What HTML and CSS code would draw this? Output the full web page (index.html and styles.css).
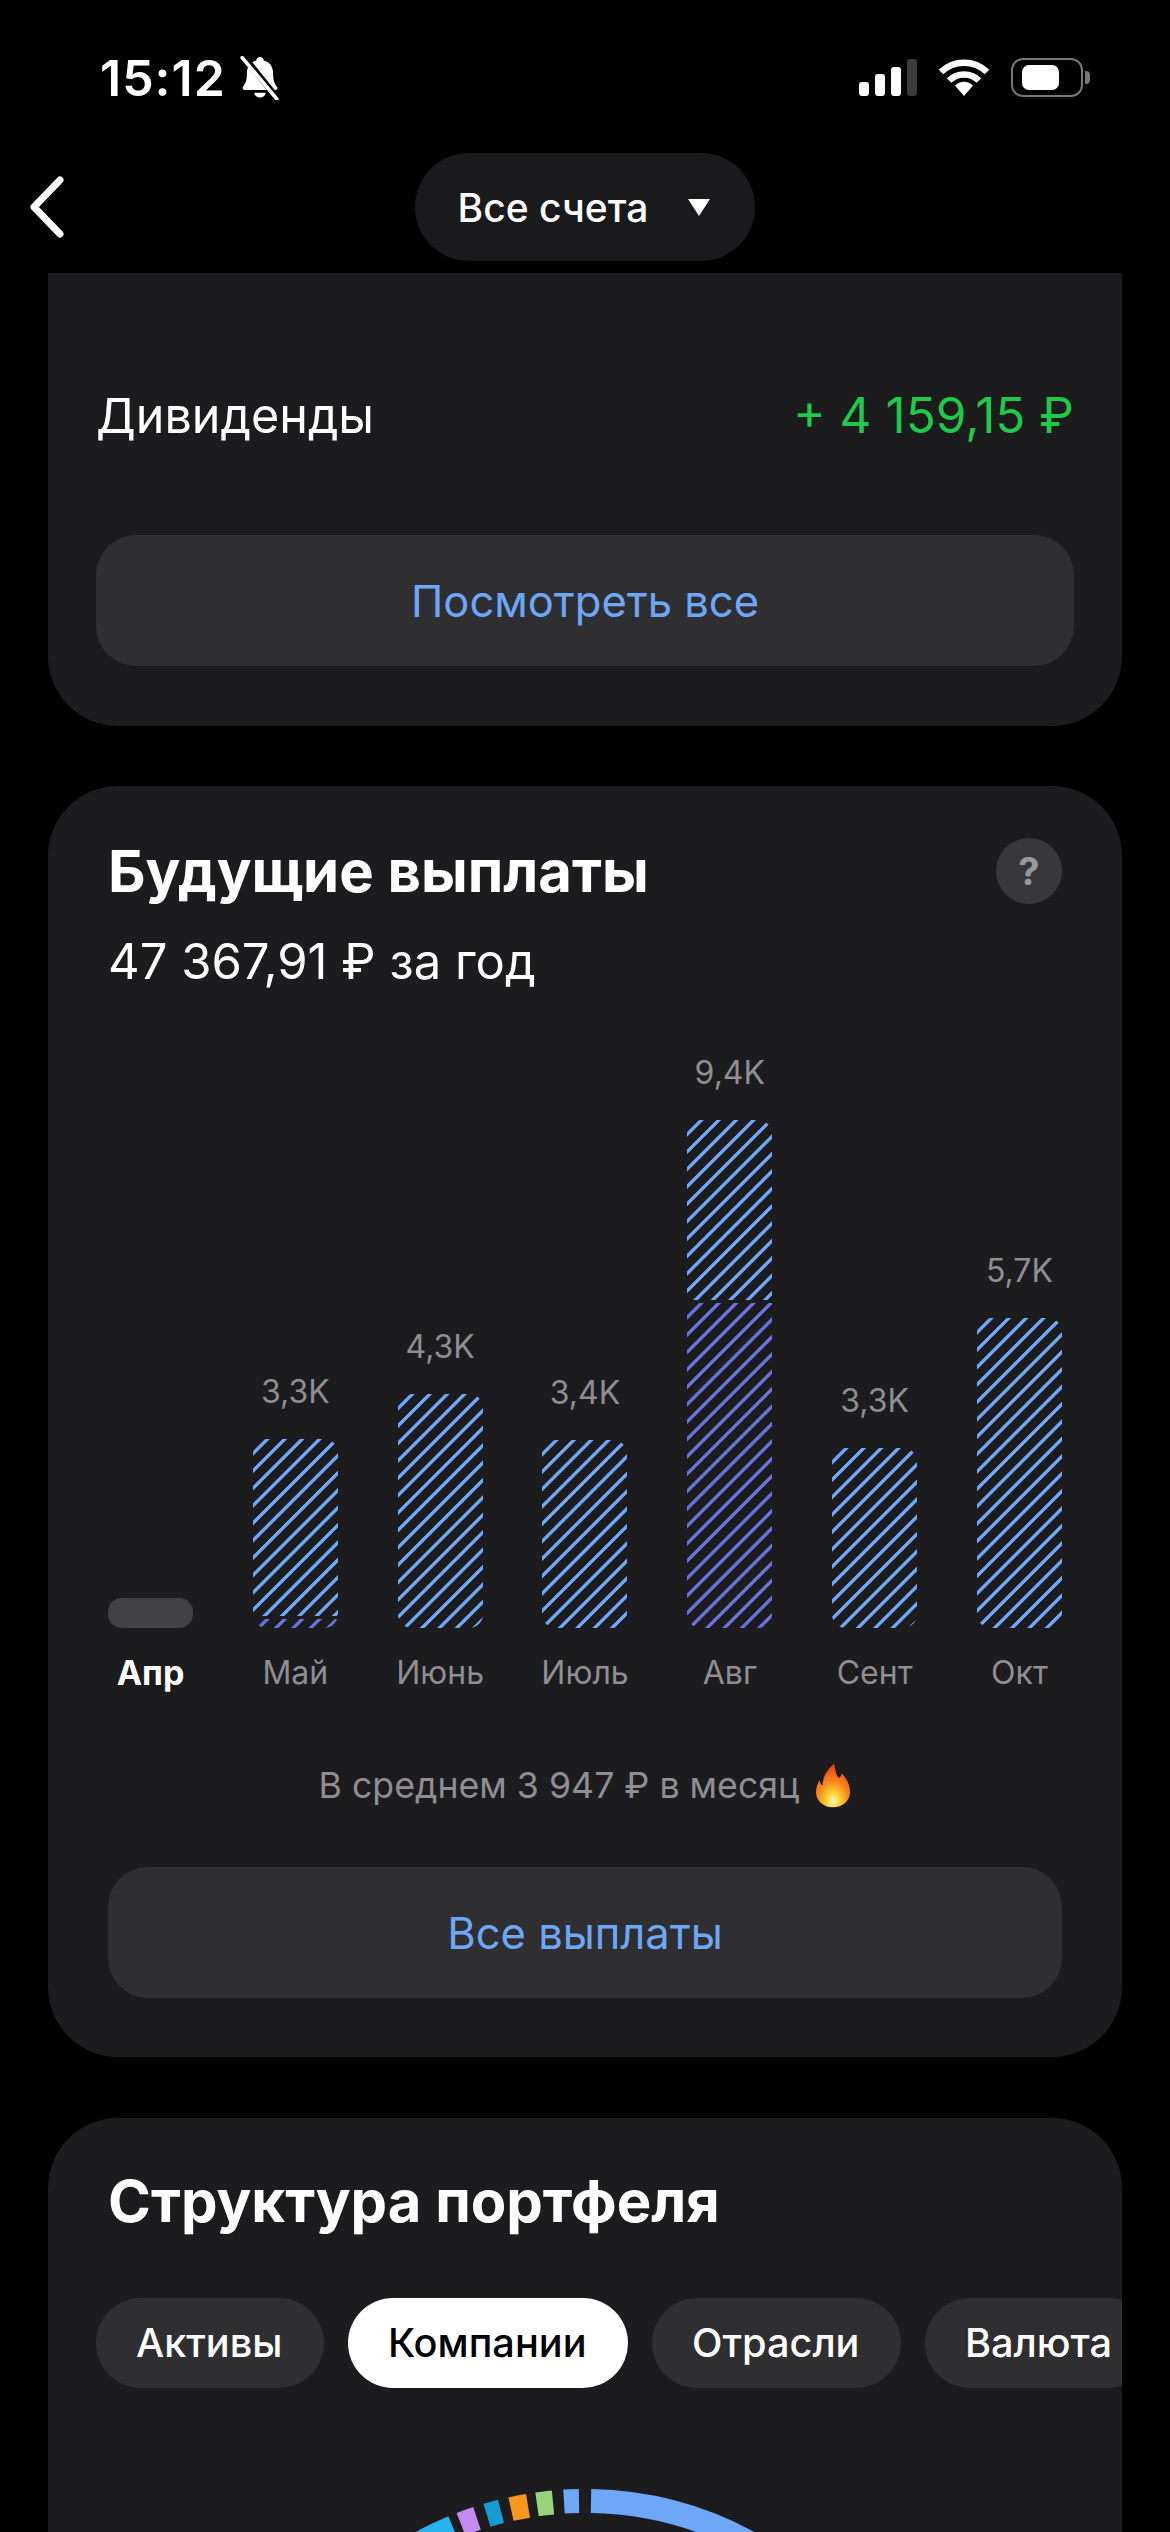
FILE: index.html
```html
<!DOCTYPE html>
<html lang="ru">
<head>
    <meta charset="UTF-8">
    <meta name="viewport" content="width=device-width, initial-scale=1.0">
    <title>Дивиденды</title>
    <link rel="stylesheet" href="styles.css">
</head>
<body>
    <header class="status-bar">
        <div class="status-left">
            <span class="time">15:12</span>
            <svg class="bell" width="44" height="44" viewBox="0 0 42 42">
                <path d="M21 1c-2 0-3.400 1.400-3.600 3.300C11.500 5.800 8.500 10.500 8.500 16.500c0 6-1 9.500-3.500 12.500-1.200 1.500-.6 3.500 1.500 3.500h29c2.100 0 2.700-2 1.500-3.500-2.500-3-3.500-6.500-3.500-12.500 0-6-3-10.700-8.900-12.200C24.400 2.400 23 1 21 1z" fill="#fff"/>
                <path d="M15.500 35a5.600 5.600 0 0 0 11 0z" fill="#fff"/>
                <path d="M6 1l32 40" stroke="#000" stroke-width="6"/>
                <path d="M4 1.500l33 39.500" stroke="#fff" stroke-width="3.500" stroke-linecap="round"/>
            </svg>
        </div>
        <div class="status-right">
            <div class="signal">
                <span class="signal-bar signal-1"></span>
                <span class="signal-bar signal-2"></span>
                <span class="signal-bar signal-3"></span>
                <span class="signal-bar signal-4"></span>
            </div>
            <svg class="wifi" width="50" height="37" viewBox="0 0 50 37">
                <path d="M2 13A33 33 0 0 1 48 13" fill="none" stroke="#fff" stroke-width="6.500"/>
                <path d="M10 21.500A21.500 21.500 0 0 1 40 21.500" fill="none" stroke="#fff" stroke-width="6.500"/>
                <path d="M25 37l-9-10.500a12.500 12.500 0 0 1 18 0z" fill="#fff"/>
            </svg>
            <div class="battery">
                <div class="battery-body"><span class="battery-fill"></span></div>
                <span class="battery-nub"></span>
            </div>
        </div>
    </header>

    <nav class="nav">
        <svg class="back" width="36" height="62" viewBox="0 0 36 62">
            <path d="M31 4L5 31l26 27" fill="none" stroke="#fff" stroke-width="7" stroke-linecap="round" stroke-linejoin="round"/>
        </svg>
        <button class="account-pill">
            <span>Все счета</span>
            <span class="pill-arrow"></span>
        </button>
    </nav>

    <main>
        <section class="card card-dividends">
            <div class="dividend-row">
                <span>Дивиденды</span>
                <span class="dividend-sum">+ 4 159,15 ₽</span>
            </div>
            <button class="wide-button">Посмотреть все</button>
        </section>

        <section class="card card-payouts">
            <div class="card-head">
                <h2>Будущие выплаты</h2>
                <span class="help">?</span>
            </div>
            <p class="year-sum">47 367,91 ₽ за год</p>

            <div class="chart">
                <div class="column">
                    <div class="bar bar-empty"></div>
                    <span class="month month-current">Апр</span>
                </div>
                <div class="column">
                    <span class="value">3,3K</span>
                    <div class="bar">
                        <div class="part part-planned" style="height: 177px"></div>
                        <div class="part part-confirmed" style="height: 9px"></div>
                    </div>
                    <span class="month">Май</span>
                </div>
                <div class="column">
                    <span class="value">4,3K</span>
                    <div class="bar">
                        <div class="part part-planned" style="height: 234px"></div>
                    </div>
                    <span class="month">Июнь</span>
                </div>
                <div class="column">
                    <span class="value">3,4K</span>
                    <div class="bar">
                        <div class="part part-planned" style="height: 188px"></div>
                    </div>
                    <span class="month">Июль</span>
                </div>
                <div class="column">
                    <span class="value">9,4K</span>
                    <div class="bar">
                        <div class="part part-planned" style="height: 180px"></div>
                        <div class="part part-confirmed" style="height: 325px"></div>
                    </div>
                    <span class="month">Авг</span>
                </div>
                <div class="column">
                    <span class="value">3,3K</span>
                    <div class="bar">
                        <div class="part part-planned" style="height: 180px"></div>
                    </div>
                    <span class="month">Сент</span>
                </div>
                <div class="column">
                    <span class="value">5,7K</span>
                    <div class="bar">
                        <div class="part part-planned" style="height: 310px"></div>
                    </div>
                    <span class="month">Окт</span>
                </div>
            </div>

            <p class="average">
                В среднем 3 947 ₽ в месяц
                <svg class="flame" width="36" height="45" viewBox="0 0 38 46">
                    <defs>
                        <radialGradient id="flame-fill" cx="0.5" cy="0.86" r="0.8">
                            <stop offset="0" stop-color="#fff7c0"/>
                            <stop offset="0.22" stop-color="#ffd83a"/>
                            <stop offset="0.55" stop-color="#fb8a1c"/>
                            <stop offset="1" stop-color="#e8431c"/>
                        </radialGradient>
                    </defs>
                    <path d="M20 0c2 6 1 10 5 15 2-1 3-3 3-5 6 6 9 13 9 20 0 9-8 16-18 16S1 39 1 30c0-5 2-9 4-13 0 3 1 5 3 6C8 14 13 6 20 0z" fill="url(#flame-fill)"/>
                </svg>
            </p>
            <button class="wide-button">Все выплаты</button>
        </section>

        <section class="card card-structure">
            <h2>Структура портфеля</h2>
            <div class="chips">
                <span class="chip">Активы</span>
                <span class="chip chip-active">Компании</span>
                <span class="chip">Отрасли</span>
                <span class="chip">Валюта</span>
            </div>
            <svg class="donut" width="1074" height="60" viewBox="0 0 1074 60">
                <g fill="none" stroke-width="24">
                    <path d="M543 22.050A343 343 0 0 1 837 198.700" stroke="#6ea6f8"/>
                    <path d="M516 22.600A343 343 0 0 1 531 22.050" stroke="#6ea6f8"/>
                    <path d="M489 25.400A343 343 0 0 1 505 23.500" stroke="#9ad37a"/>
                    <path d="M463 30.100A343 343 0 0 1 480 26.800" stroke="#f7981d"/>
                    <path d="M439 36.300A343 343 0 0 1 453 32.400" stroke="#169bd5"/>
                    <path d="M413 45.200A343 343 0 0 1 429 39.400" stroke="#c58af0"/>
                    <path d="M347 79.400A343 343 0 0 1 405 48.400" stroke="#27b4ec"/>
                </g>
            </svg>
        </section>
    </main>
</body>
</html>
```

FILE: styles.css
```css
* {
    box-sizing: border-box;
}

html, body {
    height: 2532px;
}

body {
    margin: 0;
    overflow: hidden;
    background-color: #000;
    color: #fff;
    font-family: Inter, "Noto Sans", sans-serif;
}

h2, p {
    margin: 0;
}

button {
    border: none;
    font-family: inherit;
}

/* status bar */
.status-bar {
    display: flex;
    justify-content: space-between;
    height: 153px;
    padding: 56px 80px 0 100px;
}

.status-left {
    display: flex;
    align-items: flex-start;
    gap: 12px;
}

.time {
    font-size: 50px;
    font-weight: 600;
    line-height: 44px;
    letter-spacing: 1px;
}

.status-right {
    display: flex;
    align-items: flex-start;
    gap: 22px;
    padding-top: 3px;
}

.signal {
    display: flex;
    align-items: flex-end;
    gap: 6px;
    height: 37px;
}

.signal-bar {
    width: 10px;
    border-radius: 3px;
    background-color: #fff;
}

.signal-1 { height: 14px; }
.signal-2 { height: 22px; }
.signal-3 { height: 29px; }
.signal-4 { height: 37px; background-color: #3a3a3c; }

.battery {
    display: flex;
    align-items: center;
    gap: 2px;
    margin-top: -1px;
}

.battery-body {
    width: 72px;
    height: 39px;
    padding: 5px 22px 5px 9px;
    border: 2px solid #77777a;
    border-radius: 12px;
}

.battery-fill {
    display: block;
    height: 100%;
    border-radius: 7px;
    background-color: #fff;
}

.battery-nub {
    width: 5px;
    height: 13px;
    border-radius: 0 4px 4px 0;
    background-color: #77777a;
}

/* top nav */
.nav {
    display: grid;
    grid-template-columns: 1fr auto 1fr;
    align-items: center;
    height: 108px;
}

.back {
    justify-self: start;
    margin-left: 29px;
}

.account-pill {
    display: flex;
    align-items: center;
    gap: 40px;
    grid-column: 2;
    height: 108px;
    padding: 0 45px 0 43px;
    border-radius: 54px;
    background-color: #1a1a1c;
    color: #fff;
    font-size: 39px;
    font-weight: 500;
}

.pill-arrow {
    width: 0;
    height: 0;
    border-left: 11px solid transparent;
    border-right: 11px solid transparent;
    border-top: 17px solid #fff;
}

/* cards */
main {
    padding: 12px 48px 0;
}

.card {
    border-radius: 70px;
    background-color: #1c1c1e;
}

.card h2 {
    font-size: 58px;
    font-weight: 700;
}

.wide-button {
    display: block;
    width: 100%;
    height: 131px;
    border-radius: 40px;
    background-color: #2f2f31;
    color: #6ea6f8;
    font-size: 43.5px;
}

.card-dividends {
    height: 453px;
    padding: 103px 48px 0;
    border-radius: 0 0 70px 70px;
}

.dividend-row {
    display: flex;
    justify-content: space-between;
    align-items: center;
    height: 78px;
    margin-bottom: 81px;
    font-size: 48.5px;
}

.dividend-sum {
    color: #1fc94a;
    font-size: 49.5px;
}

.card-payouts {
    height: 1271px;
    margin-top: 60px;
    padding: 52px 60px 0;
}

.card-head {
    display: flex;
    justify-content: space-between;
    align-items: center;
    height: 66px;
}

.help {
    width: 66px;
    height: 66px;
    border-radius: 50%;
    background-color: #38383a;
    color: #98989d;
    font-size: 38px;
    font-weight: 700;
    line-height: 66px;
    text-align: center;
}

.year-sum {
    margin-top: 28px;
    font-size: 49px;
    line-height: 60px;
}

/* chart */
.chart {
    display: grid;
    grid-template-columns: repeat(7, 85px);
    justify-content: space-between;
    align-items: end;
    height: 702px;
}

.column {
    display: flex;
    flex-direction: column;
    align-items: center;
}

.value {
    height: 68px;
    color: #8e8e93;
    font-size: 32px;
    line-height: 42px;
    white-space: nowrap;
}

.bar {
    display: flex;
    flex-direction: column;
    gap: 3px;
    width: 85px;
    overflow: hidden;
    border-radius: 14px;
}

.bar-empty {
    height: 30px;
    background-color: #424244;
}

.part {
    flex: none;
}

.part-planned {
    background-image: repeating-linear-gradient(135deg, transparent 0 8.2px, #6ea6f8 8.9px 11.6px, transparent 12.3px);
}

.part-confirmed {
    background-image: repeating-linear-gradient(135deg, transparent 0 8.2px, #6a70dc 8.9px 11.6px, transparent 12.3px);
}

.month {
    height: 66px;
    color: #8e8e93;
    font-size: 32px;
    line-height: 90px;
    white-space: nowrap;
}

.month-current {
    color: #fff;
    font-size: 34px;
    font-weight: 700;
}

.average {
    display: flex;
    justify-content: center;
    align-items: center;
    gap: 16px;
    height: 56px;
    margin-top: 63px;
    margin-bottom: 54px;
    color: #8e8e93;
    font-size: 35.7px;
}

/* cut off by the bottom of the screen */
.card-structure {
    height: 414px;
    margin-top: 61px;
    padding-top: 49px;
    overflow: hidden;
    border-radius: 70px 70px 0 0;
}

.card-structure h2 {
    padding-left: 60px;
    line-height: 68px;
}

.chips {
    display: flex;
    gap: 24px;
    margin-top: 63px;
    padding-left: 48px;
}

.chip {
    flex: none;
    height: 90px;
    padding: 0 41.5px 0 40px;
    border-radius: 45px;
    background-color: #2f2f31;
    font-size: 39.7px;
    font-weight: 500;
    line-height: 90px;
}

.chip-active {
    background-color: #fff;
    color: #000;
}

.donut {
    display: block;
    margin-top: 91px;
}
```
